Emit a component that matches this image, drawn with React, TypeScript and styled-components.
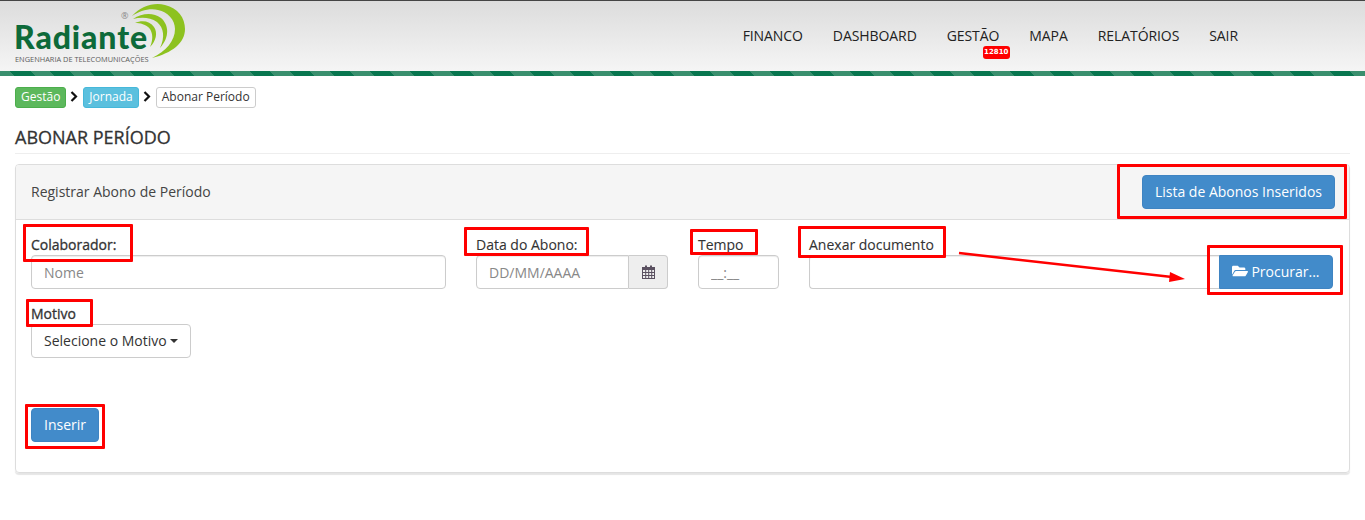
import React from 'react';
import styled, { createGlobalStyle } from 'styled-components';
import { FaFolderOpen } from 'react-icons/fa';

const Global = createGlobalStyle`
  html, body { margin: 0; padding: 0; background: #fff; }
  body { font-family: "Open Sans", "Liberation Sans", sans-serif; font-size: 14px; color: #333; }
  * { box-sizing: border-box; }
`;

const Page = styled.div`
  position: relative;
  width: 1365px;
  height: 520px;
  overflow: hidden;
`;

const Header = styled.header`
  height: 76px;
  border-top: 1px solid #444;
  display: flex;
  flex-direction: column;
`;

const HeaderMain = styled.div`
  flex: 1;
  display: flex;
  justify-content: space-between;
  background: linear-gradient(#dcdcdc, #f5f5f5);
`;

const Stripe = styled.div`
  height: 5px;
  background: repeating-linear-gradient(
    45deg,
    #3a8f6e 0 10.6px,
    #08764f 10.6px 24.75px,
    #3a8f6e 24.75px 28.28px
  );
`;

const Logo = styled.div`
  position: relative;
  width: 190px;
  height: 70px;
  margin-left: 14px;
`;

const LogoArcs = styled.svg`
  position: absolute;
  left: 101px;
  top: -1px;
`;

const LogoName = styled.span`
  position: absolute;
  left: 0;
  top: 23px;
  font-family: Lato, "Open Sans", sans-serif;
  font-weight: 900;
  font-size: 32px;
  line-height: 26px;
  letter-spacing: 0.9px;
  color: #0d6a3a;
`;

const LogoReg = styled.span`
  position: absolute;
  left: 107px;
  top: 9px;
  font-size: 9px;
  line-height: 11px;
  color: #888;
`;

const LogoTag = styled.span`
  position: absolute;
  left: 1px;
  top: 53px;
  font-size: 7.4px;
  line-height: 11px;
  white-space: nowrap;
  color: #5c5c5c;
`;

const Nav = styled.nav`
  display: flex;
  gap: 30px;
  margin-right: 127px;
  padding-top: 25px;
`;

const NavItem = styled.a`
  position: relative;
  height: 20px;
  font-size: 14px;
  line-height: 20px;
  letter-spacing: -0.08px;
  color: #222;
`;

const Badge = styled.span`
  position: absolute;
  left: 36px;
  top: 20px;
  width: 27px;
  height: 13px;
  border-radius: 3px;
  background: #f00;
  color: #fff;
  font-family: "DejaVu Sans", sans-serif;
  font-size: 7px;
  font-weight: 700;
  line-height: 13px;
  letter-spacing: 0;
  text-align: center;
`;

const Crumbs = styled.div`
  display: flex;
  align-items: center;
  height: 21px;
  margin: 11px 0 0 15px;
`;

const Crumb = styled.span<{ $bg: string; $color: string; $border: string }>`
  height: 21px;
  padding: 0 5px;
  border: 1px solid ${p => p.$border};
  border-radius: 3px;
  background: ${p => p.$bg};
  color: ${p => p.$color};
  font-size: 12px;
  line-height: 18px;
  white-space: nowrap;
`;

const Chevron = styled.svg`
  width: 8px;
  height: 11px;
  margin: 0 5px 3px 4px;
`;

const Title = styled.h1`
  margin: 19px 15px 0;
  padding-bottom: 5px;
  height: 27px;
  border-bottom: 1px solid #eee;
  font-size: 18px;
  font-weight: 400;
  -webkit-text-stroke: 0.3px #333;
  line-height: 21px;
  color: #333;
`;

const Panel = styled.section`
  height: 309px;
  margin: 10px 15px 0;
  border: 1px solid #ddd;
  border-radius: 4px;
  box-shadow: 0 2px 1px rgba(0, 0, 0, 0.1);
`;

const PanelHead = styled.div`
  height: 55px;
  padding: 10px 14px 10px 15px;
  display: flex;
  align-items: center;
  justify-content: space-between;
  background: #f5f5f5;
  border-bottom: 1px solid #ddd;
  border-radius: 3px 3px 0 0;
`;

const PanelTitle = styled.span`
  margin-bottom: 2px;
  color: #444;
  font-size: 14px;
`;

const Button = styled.button`
  height: 34px;
  padding: 0 12px 2px;
  display: inline-flex;
  align-items: center;
  gap: 3px;
  border: 1px solid #3f84c2;
  border-radius: 4px;
  background: #428bca;
  color: #fff;
  font: 400 14px "Open Sans", sans-serif;
`;

const PanelBody = styled.div`
  padding: 15px 14px 0 15px;
`;

const Row = styled.div`
  display: flex;
  gap: 30px;
`;

const Field = styled.div<{ $w: number }>`
  width: ${p => p.$w}px;
  height: 54px;
`;

const Label = styled.label<{ $strong?: boolean }>`
  display: block;
  height: 20px;
  font-size: 14px;
  line-height: 20px;
  font-weight: 500;
  -webkit-text-stroke: ${p => (p.$strong ? '0.3px #333' : '0.1px #333')};
  color: #333;
`;

const Input = styled.input`
  display: block;
  width: 100%;
  height: 34px;
  padding: 0 12px;
  border: 1px solid #ccc;
  border-radius: 4px;
  background: #fff;
  font: 400 14px "Open Sans", sans-serif;
  color: #555;
  box-shadow: inset 0 1px 1px rgba(0, 0, 0, 0.075);
  &::placeholder { color: #888; opacity: 1; }
`;

const Group = styled.div`
  display: flex;
  height: 34px;
`;

const GroupInput = styled(Input)`
  flex: 1;
  min-width: 0;
  width: auto;
  border-radius: 4px 0 0 4px;
`;

const Addon = styled.span`
  width: 39px;
  padding-left: 1px;
  display: flex;
  align-items: center;
  justify-content: center;
  border: 1px solid #ccc;
  border-left: 0;
  border-radius: 0 4px 4px 0;
  background: #eee;
`;

const FileBox = styled.div`
  flex: 1;
  border: 1px solid #ccc;
  border-right: 0;
  border-radius: 4px 0 0 4px;
  box-shadow: inset 0 1px 1px rgba(0, 0, 0, 0.075);
`;

const FileButton = styled(Button)`
  width: 114px;
  justify-content: center;
  padding: 0 0 2px;
  border-radius: 0 4px 4px 0;
  svg { font-size: 16px; }
`;

const FileRow = styled(Group)`
  margin-right: 2px;
`;

const MotiveField = styled.div`
  margin-top: 15px;
`;

const Select = styled.button`
  height: 34px;
  padding: 0 12px 2px;
  display: inline-flex;
  align-items: center;
  gap: 3px;
  border: 1px solid #ccc;
  border-radius: 4px;
  background: #fff;
  color: #333;
  font: 400 14px "Open Sans", sans-serif;
`;

const Caret = styled.i`
  width: 0;
  height: 0;
  margin-top: 2px;
  border-top: 4px solid #333;
  border-left: 4px solid transparent;
  border-right: 4px solid transparent;
`;

const Submit = styled(Button)`
  margin-top: 50px;
`;

const Mark = styled.div<{ $x: number; $y: number; $w: number; $h: number }>`
  position: absolute;
  left: ${p => p.$x}px;
  top: ${p => p.$y}px;
  width: ${p => p.$w}px;
  height: ${p => p.$h}px;
  border: 3px solid #f00;
  border-radius: 1px;
  pointer-events: none;
`;

const Arrow = styled.svg`
  position: absolute;
  left: 950px;
  top: 245px;
`;

const marks = [
  { x: 23, y: 224, w: 110, h: 38 },
  { x: 464, y: 227, w: 125, h: 29 },
  { x: 690, y: 229, w: 68, h: 26 },
  { x: 798, y: 226, w: 148, h: 32 },
  { x: 1117, y: 164, w: 230, h: 55 },
  { x: 1207, y: 245, w: 136, h: 50 },
  { x: 26, y: 299, w: 67, h: 28 },
  { x: 25, y: 404, w: 80, h: 45 },
];

const nav = ['FINANCO', 'DASHBOARD', 'GESTÃO', 'MAPA', 'RELATÓRIOS', 'SAIR'];

const Sep = () => (
  <Chevron viewBox="0 0 8 11">
    <path d="M1.5 1 L6 5.5 L1.5 10" fill="none" stroke="#111" strokeWidth="2.2" />
  </Chevron>
);

const CalendarIcon = () => (
  <svg width="13" height="14" viewBox="0 0 13 14">
    <path d="M3 0.5h2v3h-2zM8 0.5h2v3h-2z" fill="#5a5060" />
    <path
      fillRule="evenodd"
      fill="#5a5060"
      d="M0 2h13v12h-13zM1 5v2h2.2v-2zM4.2 5v2h2v-2zM7.2 5v2h2v-2zM10.2 5v2h1.8v-2zM1 8v2h2.2v-2zM4.2 8v2h2v-2zM7.2 8v2h2v-2zM10.2 8v2h1.8v-2zM1 11v2h2.2v-2zM4.2 11v2h2v-2zM7.2 11v2h2v-2zM10.2 11v2h1.8v-2z"
    />
  </svg>
);

export default function App() {
  return (
    <Page>
      <Global />
      <Header>
        <HeaderMain>
          <Logo>
            <LogoArcs width="75" height="62" viewBox="115 0 75 62">
              <path d="M132 16 C141 6 154 2 165 5 C178 8 185 18 185 29 C185 43 172 53 152 58 C166 51 175 41 175 29 C175 20 168 12 158 10 C149 8 140 11 132 16Z" fill="#8dc21f" />
              <path d="M133 19 C142 13 153 12 161 18 C169 25 170 37 160 48 C165 37 164 28 157 22 C150 17 141 17 133 19Z" fill="#8dc21f" />
              <path d="M135 23 C142 20 150 21 154 27 C158 33 156 41 150 47 C153 40 153 34 150 29 C146 24 140 23 135 23Z" fill="#8dc21f" />
            </LogoArcs>
            <LogoReg>®</LogoReg>
            <LogoName>Radiante</LogoName>
            <LogoTag>ENGENHARIA DE TELECOMUNICAÇÕES</LogoTag>
          </Logo>
          <Nav>
            {nav.map(n => (
              <NavItem key={n}>
                {n}
                {n === 'GESTÃO' && <Badge>12810</Badge>}
              </NavItem>
            ))}
          </Nav>
        </HeaderMain>
        <Stripe />
      </Header>

      <Crumbs>
        <Crumb $bg="#5cb85c" $color="#fff" $border="#4cae4c">Gestão</Crumb>
        <Sep />
        <Crumb $bg="#5bc0de" $color="#fff" $border="#46b8da">Jornada</Crumb>
        <Sep />
        <Crumb $bg="#fff" $color="#333" $border="#ccc">Abonar Período</Crumb>
      </Crumbs>

      <Title>ABONAR PERÍODO</Title>

      <Panel>
        <PanelHead>
          <PanelTitle>Registrar Abono de Período</PanelTitle>
          <Button>Lista de Abonos Inseridos</Button>
        </PanelHead>
        <PanelBody>
          <Row>
            <Field $w={415}>
              <Label $strong>Colaborador:</Label>
              <Input placeholder="Nome" />
            </Field>
            <Field $w={192}>
              <Label>Data do Abono:</Label>
              <Group>
                <GroupInput placeholder="DD/MM/AAAA" />
                <Addon><CalendarIcon /></Addon>
              </Group>
            </Field>
            <Field $w={81}>
              <Label>Tempo</Label>
              <Input placeholder="__:__" />
            </Field>
            <Field $w={526}>
              <Label>Anexar documento</Label>
              <FileRow>
                <FileBox />
                <FileButton><FaFolderOpen /> Procurar...</FileButton>
              </FileRow>
            </Field>
          </Row>
          <MotiveField>
            <Label $strong>Motivo</Label>
            <Select>Selecione o Motivo <Caret /></Select>
          </MotiveField>
          <Submit>Inserir</Submit>
        </PanelBody>
      </Panel>

      {marks.map(m => (
        <Mark key={`${m.x}-${m.y}`} $x={m.x} $y={m.y} $w={m.w} $h={m.h} />
      ))}
      <Arrow width="240" height="45" viewBox="0 0 240 45">
        <path d="M9 8 L222 32" stroke="#f00" strokeWidth="2.5" />
        <path d="M235 34 L220 27 L219 37 Z" fill="#f00" />
      </Arrow>
    </Page>
  );
}
